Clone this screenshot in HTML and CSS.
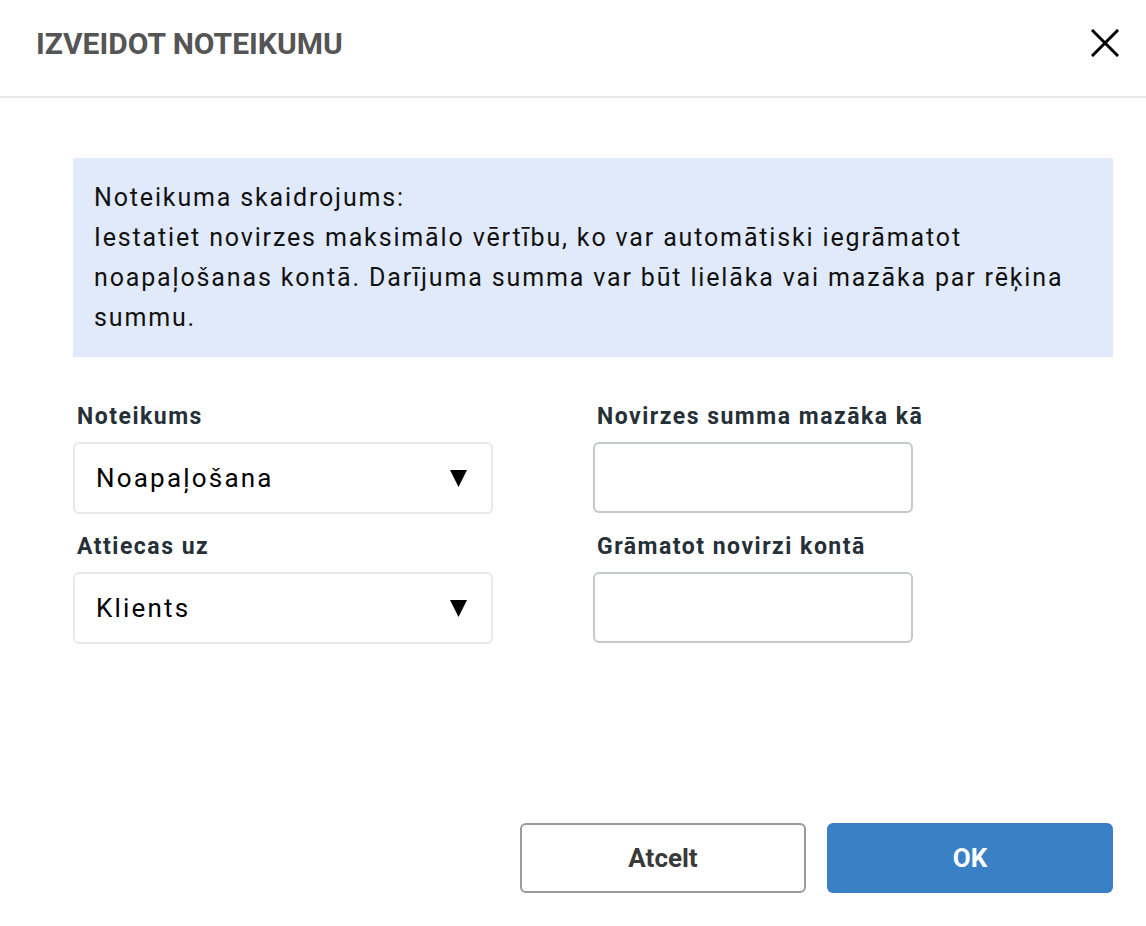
FILE: index.html
```html
<!DOCTYPE html>
<html lang="lv">
<head>
<meta charset="utf-8">
<title>Izveidot noteikumu</title>
<link rel="stylesheet" href="styles.css">
</head>
<body>
<div class="dialog">
  <header class="dialog-header">
    <h1 class="dialog-title">IZVEIDOT NOTEIKUMU</h1>
    <button class="close-btn" type="button" aria-label="Aizvērt">
      <svg width="28" height="28" viewBox="0 0 28 28"><path d="M2 2 L26 26 M26 2 L2 26" stroke="#000" stroke-width="3" stroke-linecap="square" fill="none"/></svg>
    </button>
  </header>
  <main class="dialog-body">
    <div class="info-box">
      <p>Noteikuma skaidrojums:<br>Iestatiet novirzes maksimālo vērtību, ko var automātiski iegrāmatot noapaļošanas kontā. Darījuma summa var būt lielāka vai mazāka par rēķina summu.</p>
    </div>
    <div class="form-grid">
      <div class="field">
        <label class="field-label">Noteikums</label>
        <div class="select">
          <span class="select-value">Noapaļošana</span>
          <svg class="select-arrow" width="17" height="17" viewBox="0 0 17 17"><polygon points="0,0 17,0 8.5,17" fill="#000"/></svg>
        </div>
      </div>
      <div class="field">
        <label class="field-label">Novirzes summa mazāka kā</label>
        <div class="input"></div>
      </div>
      <div class="field">
        <label class="field-label">Attiecas uz</label>
        <div class="select">
          <span class="select-value">Klients</span>
          <svg class="select-arrow" width="17" height="17" viewBox="0 0 17 17"><polygon points="0,0 17,0 8.5,17" fill="#000"/></svg>
        </div>
      </div>
      <div class="field">
        <label class="field-label">Grāmatot novirzi kontā</label>
        <div class="input"></div>
      </div>
    </div>
  </main>
  <footer class="dialog-footer">
    <button class="btn btn-secondary" type="button">Atcelt</button>
    <button class="btn btn-primary" type="button">OK</button>
  </footer>
</div>
</body>
</html>
```
FILE: styles.css
```css
* { box-sizing: border-box; }
html, body { margin: 0; padding: 0; background: #fff; }
body {
  font-family: Roboto, "Liberation Sans", Arial, sans-serif;
  width: 1146px;
  height: 926px;
  overflow: hidden;
}
.dialog { display: flex; flex-direction: column; height: 926px; }
.dialog-header {
  height: 98px;
  border-bottom: 2px solid #e8e8e8;
  display: flex;
  align-items: center;
  justify-content: space-between;
  padding: 0 27px 10px 36px;
}
.dialog-title {
  margin: 0;
  font-size: 30px;
  font-weight: 700;
  color: #555555;
  letter-spacing: 0;
}
.close-btn {
  border: 0;
  background: none;
  padding: 0;
  width: 28px;
  height: 28px;
  display: flex;
  cursor: pointer;
}
.dialog-body { padding: 60px 33px 0 73px; flex: 1; }
.info-box {
  background: #e1eafb;
  padding: 20px 20px 19px 21px;
}
.info-box p {
  margin: 0;
  font-size: 25px;
  line-height: 40px;
  letter-spacing: 1.85px;
  color: #111;
}
.form-grid {
  display: grid;
  grid-template-columns: 420px 320px;
  column-gap: 100px;
  row-gap: 20px;
  margin-top: 47px;
}
.field { display: flex; flex-direction: column; }
.field-label {
  font-size: 23px;
  font-weight: 700;
  line-height: 26px;
  letter-spacing: 1.5px;
  color: #263038;
  padding-left: 4px;
  margin-bottom: 12px;
  white-space: nowrap;
}
.select {
  height: 72px;
  border: 2px solid #e9e9e9;
  border-radius: 6px;
  display: flex;
  align-items: center;
  justify-content: space-between;
  padding: 0 24px 0 21px;
}
.select-value {
  font-size: 26px;
  letter-spacing: 2.2px;
  color: #000;
}
.input {
  height: 71px;
  border: 2px solid #c6c9cc;
  border-radius: 6px;
}
.dialog-footer {
  display: flex;
  justify-content: flex-end;
  gap: 21px;
  padding: 0 33px 33px 0;
}
.btn {
  width: 286px;
  height: 70px;
  border-radius: 6px;
  font-family: Roboto, "Liberation Sans", Arial, sans-serif;
  font-size: 26px;
  font-weight: 700;
  cursor: pointer;
}
.btn-secondary {
  background: #fff;
  border: 2px solid #9a9a9a;
  color: #3a3a3a;
}
.btn-primary {
  background: #3a80c5;
  border: 0;
  color: #fff;
}
```
